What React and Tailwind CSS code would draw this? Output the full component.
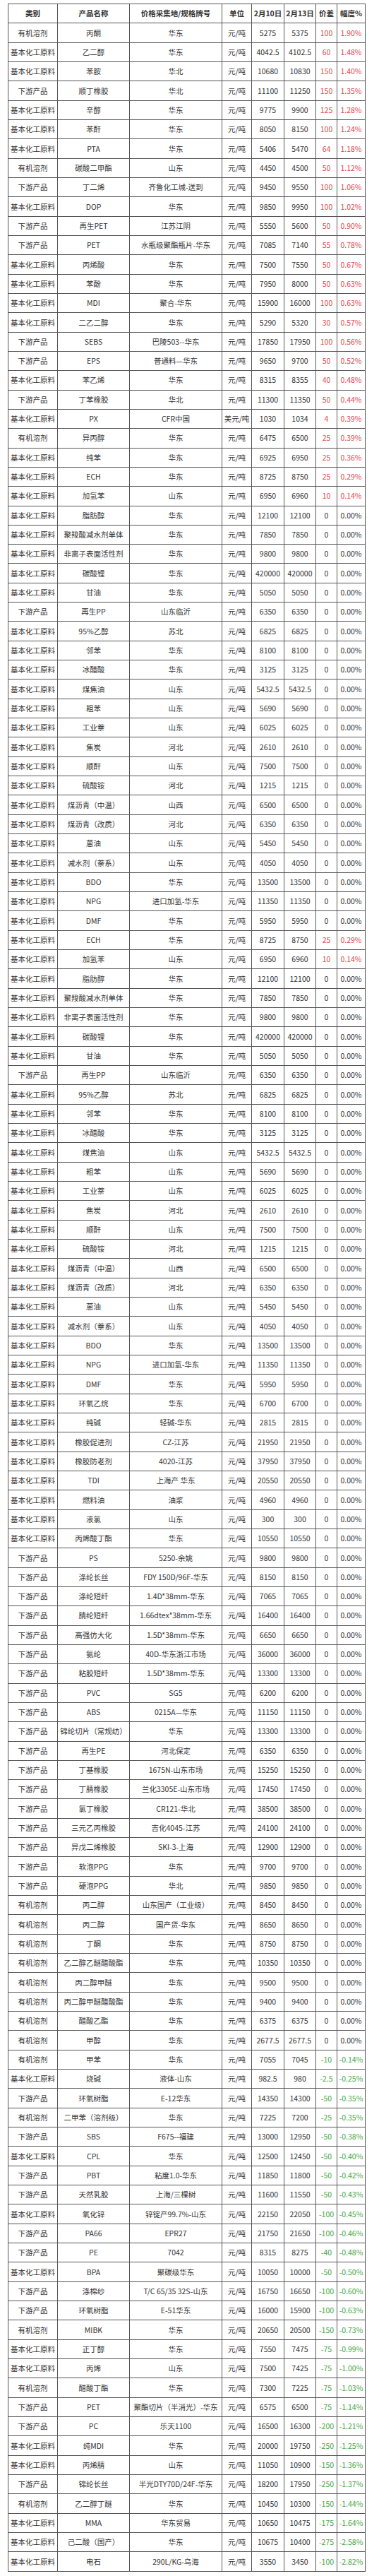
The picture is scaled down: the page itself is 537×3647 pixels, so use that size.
import React from "react";

const CAT = { A: "有机溶剂", B: "基本化工原料", C: "下游产品" };

// cat|name|place|d1|d2|diff|pct  (unit defaults to 元/吨)
const raw = `A|丙酮|华东|5275|5375|100|1.90%
B|乙二醇|华东|4042.5|4102.5|60|1.48%
B|苯胺|华北|10680|10830|150|1.40%
C|顺丁橡胶|华北|11100|11250|150|1.35%
B|辛醇|华东|9775|9900|125|1.28%
B|苯酐|华东|8050|8150|100|1.24%
B|PTA|华东|5406|5470|64|1.18%
A|碳酸二甲酯|山东|4450|4500|50|1.12%
C|丁二烯|齐鲁化工城-送到|9450|9550|100|1.06%
B|DOP|华东|9850|9950|100|1.02%
C|再生PET|江苏江阴|5550|5600|50|0.90%
C|PET|水瓶级聚酯瓶片-华东|7085|7140|55|0.78%
B|丙烯酸|华东|7500|7550|50|0.67%
B|苯酚|华东|7950|8000|50|0.63%
B|MDI|聚合-华东|15900|16000|100|0.63%
B|二乙二醇|华东|5290|5320|30|0.57%
C|SEBS|巴陵503--华东|17850|17950|100|0.56%
C|EPS|普通料—华东|9650|9700|50|0.52%
B|苯乙烯|华东|8315|8355|40|0.48%
C|丁苯橡胶|华北|11300|11350|50|0.44%
B|PX|CFR中国|1030|1034|4|0.39%|美元/吨
A|异丙醇|华东|6475|6500|25|0.39%
B|纯苯|华东|6925|6950|25|0.36%
B|ECH|华东|8725|8750|25|0.29%
B|加氢苯|山东|6950|6960|10|0.14%
B|脂肪醇|华东|12100|12100|0|0.00%
B|聚羧酸减水剂单体|华东|7850|7850|0|0.00%
B|非离子表面活性剂|华东|9800|9800|0|0.00%
B|碳酸锂|华东|420000|420000|0|0.00%
B|甘油|华东|5050|5050|0|0.00%
C|再生PP|山东临沂|6350|6350|0|0.00%
B|95%乙醇|苏北|6825|6825|0|0.00%
B|邻苯|华东|8100|8100|0|0.00%
B|冰醋酸|华东|3125|3125|0|0.00%
B|煤焦油|山东|5432.5|5432.5|0|0.00%
B|粗苯|山东|5690|5690|0|0.00%
B|工业萘|山东|6025|6025|0|0.00%
B|焦炭|河北|2610|2610|0|0.00%
B|顺酐|山东|7500|7500|0|0.00%
B|硫酸铵|河北|1215|1215|0|0.00%
B|煤沥青（中温）|山西|6500|6500|0|0.00%
B|煤沥青（改质）|河北|6350|6350|0|0.00%
B|蒽油|山东|5450|5450|0|0.00%
B|减水剂（萘系）|山东|4050|4050|0|0.00%
B|BDO|华东|13500|13500|0|0.00%
B|NPG|进口加氢-华东|11350|11350|0|0.00%
B|DMF|华东|5950|5950|0|0.00%
B|ECH|华东|8725|8750|25|0.29%
B|加氢苯|山东|6950|6960|10|0.14%
B|脂肪醇|华东|12100|12100|0|0.00%
B|聚羧酸减水剂单体|华东|7850|7850|0|0.00%
B|非离子表面活性剂|华东|9800|9800|0|0.00%
B|碳酸锂|华东|420000|420000|0|0.00%
B|甘油|华东|5050|5050|0|0.00%
C|再生PP|山东临沂|6350|6350|0|0.00%
B|95%乙醇|苏北|6825|6825|0|0.00%
B|邻苯|华东|8100|8100|0|0.00%
B|冰醋酸|华东|3125|3125|0|0.00%
B|煤焦油|山东|5432.5|5432.5|0|0.00%
B|粗苯|山东|5690|5690|0|0.00%
B|工业萘|山东|6025|6025|0|0.00%
B|焦炭|河北|2610|2610|0|0.00%
B|顺酐|山东|7500|7500|0|0.00%
B|硫酸铵|河北|1215|1215|0|0.00%
B|煤沥青（中温）|山西|6500|6500|0|0.00%
B|煤沥青（改质）|河北|6350|6350|0|0.00%
B|蒽油|山东|5450|5450|0|0.00%
B|减水剂（萘系）|山东|4050|4050|0|0.00%
B|BDO|华东|13500|13500|0|0.00%
B|NPG|进口加氢-华东|11350|11350|0|0.00%
B|DMF|华东|5950|5950|0|0.00%
B|环氧乙烷|华东|6700|6700|0|0.00%
B|纯碱|轻碱-华东|2815|2815|0|0.00%
B|橡胶促进剂|CZ-江苏|21950|21950|0|0.00%
B|橡胶防老剂|4020-江苏|37950|37950|0|0.00%
B|TDI|上海产 华东|20550|20550|0|0.00%
B|燃料油|油浆|4960|4960|0|0.00%
B|液氯|山东|300|300|0|0.00%
B|丙烯酸丁酯|华东|10550|10550|0|0.00%
C|PS|5250-余姚|9800|9800|0|0.00%
C|涤纶长丝|FDY 150D/96F-华东|8150|8150|0|0.00%
C|涤纶短纤|1.4D*38mm-华东|7065|7065|0|0.00%
C|腈纶短纤|1.66dtex*38mm-华东|16400|16400|0|0.00%
C|高强仿大化|1.5D*38mm-华东|6650|6650|0|0.00%
C|氨纶|40D-华东浙江市场|36000|36000|0|0.00%
C|粘胶短纤|1.5D*38mm-华东|13300|13300|0|0.00%
C|PVC|SG5|6200|6200|0|0.00%
C|ABS|0215A—华东|11150|11150|0|0.00%
C|锦纶切片（常规纺）|华东|13300|13300|0|0.00%
C|再生PE|河北保定|6350|6350|0|0.00%
C|丁基橡胶|1675N-山东市场|15250|15250|0|0.00%
C|丁腈橡胶|兰化3305E-山东市场|17450|17450|0|0.00%
C|氯丁橡胶|CR121-华北|38500|38500|0|0.00%
C|三元乙丙橡胶|吉化4045-江苏|24100|24100|0|0.00%
C|异戊二烯橡胶|SKI-3-上海|12900|12900|0|0.00%
C|软泡PPG|华东|9700|9700|0|0.00%
C|硬泡PPG|华北|9850|9850|0|0.00%
A|丙二醇|山东国产（工业级）|8450|8450|0|0.00%
A|丙二醇|国产货-华东|8650|8650|0|0.00%
A|丁酮|华东|8750|8750|0|0.00%
A|乙二醇乙醚醋酸酯|华东|10350|10350|0|0.00%
A|丙二醇甲醚|华东|9500|9500|0|0.00%
A|丙二醇甲醚醋酸酯|华东|9400|9400|0|0.00%
A|醋酸乙酯|华东|6375|6375|0|0.00%
A|甲醇|华东|2677.5|2677.5|0|0.00%
A|甲苯|华东|7055|7045|-10|-0.14%
B|烧碱|液体-山东|982.5|980|-2.5|-0.25%
C|环氧树脂|E-12华东|14350|14300|-50|-0.35%
A|二甲苯（溶剂级）|华东|7225|7200|-25|-0.35%
C|SBS|F675--福建|13000|12950|-50|-0.38%
B|CPL|华东|12500|12450|-50|-0.40%
C|PBT|粘度1.0-华东|11850|11800|-50|-0.42%
C|天然乳胶|上海/三棵树|11600|11550|-50|-0.43%
B|氧化锌|锌锭产99.7%-山东|22150|22050|-100|-0.45%
C|PA66|EPR27|21750|21650|-100|-0.46%
C|PE|7042|8315|8275|-40|-0.48%
B|BPA|聚碳级华东|10050|10000|-50|-0.50%
C|涤棉纱|T/C 65/35 32S-山东|16750|16650|-100|-0.60%
C|环氧树脂|E-51华东|16000|15900|-100|-0.63%
A|MIBK|华东|20650|20500|-150|-0.73%
B|正丁醇|华东|7550|7475|-75|-0.99%
B|丙烯|山东|7500|7425|-75|-1.00%
A|醋酸丁酯|华东|7300|7225|-75|-1.03%
C|PET|聚酯切片（半消光）-华东|6575|6500|-75|-1.14%
C|PC|乐天1100|16500|16300|-200|-1.21%
B|纯MDI|华东|20000|19750|-250|-1.25%
B|丙烯腈|山东|11050|10900|-150|-1.36%
C|锦纶长丝|半光DTY70D/24F-华东|18200|17950|-250|-1.37%
A|乙二醇丁醚|华东|10450|10300|-150|-1.44%
B|MMA|华东贸易|10650|10475|-175|-1.64%
B|己二酸（国产）|华东|10675|10400|-275|-2.58%
B|电石|290L/KG-乌海|3550|3450|-100|-2.82%`;

const rows = raw.split("\n").map((line) => {
  const [c, name, place, d1, d2, diff, pct, unit] = line.split("|");
  return { cat: CAT[c], name, place, unit: unit || "元/吨", d1, d2, diff, pct };
});

const headers = ["类别", "产品名称", "价格采集地/规格牌号", "单位", "2月10日", "2月13日", "价差", "幅度%"];

const diffColor = (v) => {
  const n = parseFloat(v);
  if (n > 0) return "text-[#e5484d]";
  if (n < 0) return "text-[#45a845]";
  return "";
};

const cell = "border border-[#555] text-center whitespace-nowrap p-0 overflow-hidden";

export default function App() {
  return (
    <div
      className="bg-white w-[537px] min-h-[3647px] pt-[5px] pl-[11px] text-[#333] text-[10.5px]"
      style={{ fontFamily: '"Noto Sans CJK SC", "Noto Sans", sans-serif' }}
    >
      <table className="table-fixed border-collapse w-[506px]">
        <colgroup>
          <col className="w-[70px]" />
          <col className="w-[102px]" />
          <col className="w-[131px]" />
          <col className="w-[42px]" />
          <col className="w-[46px]" />
          <col className="w-[45px]" />
          <col className="w-[30px]" />
          <col className="w-[40px]" />
        </colgroup>
        <thead>
          <tr className="h-[27.3px]">
            {headers.map((h) => (
              <th key={h} className={`${cell} font-bold text-[#333]`}>
                {h}
              </th>
            ))}
          </tr>
        </thead>
        <tbody>
          {rows.map((r, i) => (
            <tr key={i} className="h-[27.34px]">
              <td className={cell}>{r.cat}</td>
              <td className={cell}>{r.name}</td>
              <td className={cell}>{r.place}</td>
              <td className={cell}>{r.unit}</td>
              <td className={cell}>{r.d1}</td>
              <td className={cell}>{r.d2}</td>
              <td className={`${cell} ${diffColor(r.diff)}`}>{r.diff}</td>
              <td className={`${cell} ${diffColor(r.diff)}`}>{r.pct}</td>
            </tr>
          ))}
        </tbody>
      </table>
    </div>
  );
}
